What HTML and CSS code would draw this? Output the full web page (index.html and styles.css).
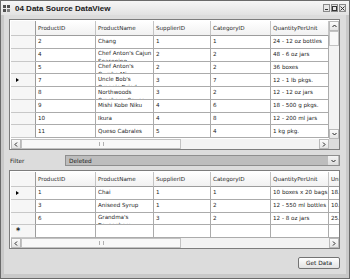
FILE: index.html
```html
<!DOCTYPE html>
<html lang="en">
<head>
    <meta charset="UTF-8">
    <meta name="viewport" content="width=device-width, initial-scale=1.0">
    <title>04 Data Source DataView</title>
    <link rel="stylesheet" href="styles.css">
</head>
<body>
<div class="window">
    <div class="titlebar">
        <svg class="app-icon" width="8" height="7" viewBox="0 0 8 7">
            <rect x="0" y="0" width="3" height="3" fill="#505050"/>
            <rect x="4" y="0" width="3" height="3" fill="#505050"/>
            <rect x="0" y="4" width="3" height="3" fill="#505050"/>
            <rect x="4" y="4" width="3" height="3" fill="#808080"/>
        </svg>
        <span class="title">04 Data Source DataView</span>
        <div class="caption">
            <span class="cap-btn"><svg width="5" height="5" viewBox="0 0 5 5"><rect x="1" y="3" width="3" height="1" fill="#333"/></svg></span>
            <span class="cap-btn"><svg width="5" height="5" viewBox="0 0 5 5"><rect x="0.5" y="0.5" width="4" height="4" fill="none" stroke="#333"/></svg></span>
            <span class="cap-btn"><svg width="5" height="5" viewBox="0 0 5 5"><path d="M0.5 0.5L4.5 4.5M4.5 0.5L0.5 4.5" stroke="#333"/></svg></span>
        </div>
    </div>

    <div class="client">
        <!-- products grid -->
        <div class="grid grid-top">
            <div class="view">
                <div class="row head">
                    <div class="cell rh"></div>
                    <div class="cell">ProductID</div>
                    <div class="cell">ProductName</div>
                    <div class="cell">SupplierID</div>
                    <div class="cell">CategoryID</div>
                    <div class="cell">QuantityPerUnit</div>
                </div>
                <div class="row">
                    <div class="cell rh"></div>
                    <div class="cell"><span>2</span></div>
                    <div class="cell"><span>Chang</span></div>
                    <div class="cell"><span>1</span></div>
                    <div class="cell"><span>1</span></div>
                    <div class="cell"><span>24 - 12 oz bottles</span></div>
                </div>
                <div class="row">
                    <div class="cell rh"></div>
                    <div class="cell"><span>4</span></div>
                    <div class="cell wrap"><span>Chef Anton's Cajun Seasoning</span></div>
                    <div class="cell"><span>2</span></div>
                    <div class="cell"><span>2</span></div>
                    <div class="cell"><span>48 - 6 oz jars</span></div>
                </div>
                <div class="row">
                    <div class="cell rh"></div>
                    <div class="cell"><span>5</span></div>
                    <div class="cell wrap"><span>Chef Anton's Gumbo Mix</span></div>
                    <div class="cell"><span>2</span></div>
                    <div class="cell"><span>2</span></div>
                    <div class="cell"><span>36 boxes</span></div>
                </div>
                <div class="row">
                    <div class="cell rh"><i class="current"></i></div>
                    <div class="cell"><span>7</span></div>
                    <div class="cell wrap"><span>Uncle Bob's Organic Dried Pears</span></div>
                    <div class="cell"><span>3</span></div>
                    <div class="cell"><span>7</span></div>
                    <div class="cell"><span>12 - 1 lb pkgs.</span></div>
                </div>
                <div class="row">
                    <div class="cell rh"></div>
                    <div class="cell"><span>8</span></div>
                    <div class="cell wrap"><span>Northwoods Cranberry Sauce</span></div>
                    <div class="cell"><span>3</span></div>
                    <div class="cell"><span>2</span></div>
                    <div class="cell"><span>12 - 12 oz jars</span></div>
                </div>
                <div class="row">
                    <div class="cell rh"></div>
                    <div class="cell"><span>9</span></div>
                    <div class="cell"><span>Mishi Kobe Niku</span></div>
                    <div class="cell"><span>4</span></div>
                    <div class="cell"><span>6</span></div>
                    <div class="cell"><span>18 - 500 g pkgs.</span></div>
                </div>
                <div class="row">
                    <div class="cell rh"></div>
                    <div class="cell"><span>10</span></div>
                    <div class="cell"><span>Ikura</span></div>
                    <div class="cell"><span>4</span></div>
                    <div class="cell"><span>8</span></div>
                    <div class="cell"><span>12 - 200 ml jars</span></div>
                </div>
                <div class="row">
                    <div class="cell rh"></div>
                    <div class="cell"><span>11</span></div>
                    <div class="cell"><span>Queso Cabrales</span></div>
                    <div class="cell"><span>5</span></div>
                    <div class="cell"><span>4</span></div>
                    <div class="cell"><span>1 kg pkg.</span></div>
                </div>
            </div>
            <div class="vscroll">
                <span class="sb-btn"><svg width="5" height="4" viewBox="0 0 5 4"><path d="M0.5 3L2.5 1L4.5 3" stroke="#222" fill="none"/></svg></span>
                <span class="sb-thumb v"></span>
                <span class="sb-track"></span>
                <span class="sb-btn"><svg width="5" height="4" viewBox="0 0 5 4"><path d="M0.5 1L2.5 3L4.5 1" stroke="#222" fill="none"/></svg></span>
            </div>
            <div class="hscroll">
                <span class="sb-btn"><svg width="4" height="5" viewBox="0 0 4 5"><path d="M3 0.5L1 2.5L3 4.5" stroke="#222" fill="none"/></svg></span>
                <span class="sb-thumb h"><b class="grip"></b></span>
                <span class="sb-track"></span>
                <span class="sb-btn"><svg width="4" height="5" viewBox="0 0 4 5"><path d="M1 0.5L3 2.5L1 4.5" stroke="#222" fill="none"/></svg></span>
            </div>
            <div class="corner"></div>
        </div>

        <div class="filter">
            <label class="filter-label">Filter</label>
            <div class="combo">
                <span class="combo-text">Deleted</span>
                <span class="combo-btn"><svg width="5" height="4" viewBox="0 0 5 4"><path d="M0.5 1L2.5 3L4.5 1" stroke="#222" fill="none"/></svg></span>
            </div>
        </div>

        <!-- filtered view -->
        <div class="grid grid-bottom">
            <div class="view">
                <div class="row head">
                    <div class="cell rh"></div>
                    <div class="cell">ProductID</div>
                    <div class="cell">ProductName</div>
                    <div class="cell">SupplierID</div>
                    <div class="cell">CategoryID</div>
                    <div class="cell">QuantityPerUnit</div>
                    <div class="cell">UnitPrice</div>
                </div>
                <div class="row">
                    <div class="cell rh"><i class="current"></i></div>
                    <div class="cell"><span>1</span></div>
                    <div class="cell"><span>Chai</span></div>
                    <div class="cell"><span>1</span></div>
                    <div class="cell"><span>1</span></div>
                    <div class="cell"><span>10 boxes x 20 bags</span></div>
                    <div class="cell"><span>18.0000</span></div>
                </div>
                <div class="row">
                    <div class="cell rh"></div>
                    <div class="cell"><span>3</span></div>
                    <div class="cell"><span>Aniseed Syrup</span></div>
                    <div class="cell"><span>1</span></div>
                    <div class="cell"><span>2</span></div>
                    <div class="cell"><span>12 - 550 ml bottles</span></div>
                    <div class="cell"><span>10.0000</span></div>
                </div>
                <div class="row">
                    <div class="cell rh"></div>
                    <div class="cell"><span>6</span></div>
                    <div class="cell wrap"><span>Grandma's Boysenberry Spread</span></div>
                    <div class="cell"><span>3</span></div>
                    <div class="cell"><span>2</span></div>
                    <div class="cell"><span>12 - 8 oz jars</span></div>
                    <div class="cell"><span>25.0000</span></div>
                </div>
                <div class="row">
                    <div class="cell rh"><span class="newrow">*</span></div>
                    <div class="cell"></div>
                    <div class="cell"></div>
                    <div class="cell"></div>
                    <div class="cell"></div>
                    <div class="cell"></div>
                    <div class="cell"></div>
                </div>
            </div>
            <div class="hscroll">
                <span class="sb-btn"><svg width="4" height="5" viewBox="0 0 4 5"><path d="M3 0.5L1 2.5L3 4.5" stroke="#222" fill="none"/></svg></span>
                <span class="sb-thumb h"><b class="grip"></b></span>
                <span class="sb-track"></span>
                <span class="sb-btn"><svg width="4" height="5" viewBox="0 0 4 5"><path d="M1 0.5L3 2.5L1 4.5" stroke="#222" fill="none"/></svg></span>
            </div>
        </div>

        <div class="actions">
            <button type="button" class="get-data">Get Data</button>
        </div>
    </div>
</div>
</body>
</html>
```

FILE: styles.css
```css
body{
    margin: 0;
    background: #d8d8d8;
    font-family: "DejaVu Sans", Verdana, sans-serif;
    color: #1c1c1c;
}
.window{
    width: 350px;
    height: 279px;
    box-sizing: border-box;
    border: 1px solid #6a6a6a;
    background: #c9c9c9;
    display: flex;
    flex-direction: column;
}
.titlebar{
    height: 14px;
    flex: none;
    display: flex;
    align-items: center;
    padding: 0 3px 0 2px;
    background: linear-gradient(#f6f6f6, #e2e2e2);
}
.app-icon{
    margin-right: 4px;
}
.title{
    font-family: "Liberation Sans", Arial, sans-serif;
    font-weight: bold;
    font-size: 8px;
    color: #1a1a1a;
}
.caption{
    margin-left: auto;
    display: flex;
    gap: 1px;
}
.cap-btn{
    width: 7px;
    height: 8px;
    box-sizing: border-box;
    border: 1px solid #8a8a8a;
    background: #e6e6e6;
    display: flex;
    align-items: center;
    justify-content: center;
}
.client{
    flex: 1;
    margin: 0 3px 4px;
    padding: 4px 6px 0 5px;
    background: #dcdcdc;
    display: flex;
    flex-direction: column;
}

/* data grids */
.grid{
    display: grid;
    border: 1px solid #7d7d7d;
    padding: 1px 0 0 1px;
    background: #fff;
}
.grid-top{
    grid-template-columns: 1fr 10px;
    grid-template-rows: 118px 10px;
}
.grid-bottom{
    grid-template-columns: 1fr;
    grid-template-rows: 66px 10px;
}
.view{
    overflow: hidden;
    background: #fff;
}
.row{
    display: grid;
    height: 12.75px;
    grid-template-rows: 12.75px;
}
.grid-top .row{
    grid-template-columns: 25px 60px 58px 57px 60px 58px;
}
.grid-bottom .row{
    grid-template-columns: 25px 60px 58px 57px 60px 58px 60px;
}
.row.head{
    height: 15px;
    grid-template-rows: 15px;
}
.cell{
    box-sizing: border-box;
    min-height: 0;
    border-right: 1px solid #ababab;
    border-bottom: 1px solid #ababab;
    padding: 0 0 0 2px;
    display: flex;
    align-items: center;
    overflow: hidden;
    font-size: 5.6px;
    line-height: 7px;
    background: #fff;
}
.cell span{
    flex: none;
    max-width: 100%;
}
.cell.wrap{
    align-items: flex-start;
    line-height: 8px;
    padding-top: 0.5px;
}
.head .cell{
    background: linear-gradient(#ffffff, #f1f1f1);
    border-right-color: #c4c4c4;
    border-bottom-color: #9c9c9c;
    color: #2a2a2a;
    white-space: nowrap;
}
.cell.rh{
    background: #f6f6f6;
    border-right-color: #9c9c9c;
    border-bottom-color: #c8c8c8;
    padding-left: 5px;
}
.current{
    width: 0;
    height: 0;
    border-left: 3px solid #000;
    border-top: 2.5px solid transparent;
    border-bottom: 2.5px solid transparent;
}
.newrow{
    font-size: 8px;
    font-weight: bold;
    line-height: 8px;
    padding-top: 2px;
}

/* scrollbars */
.vscroll, .hscroll{
    display: flex;
    background: #f3f3f3;
}
.vscroll{
    flex-direction: column;
}
.sb-btn{
    flex: none;
    width: 10px;
    height: 10px;
    box-sizing: border-box;
    border: 1px solid #b9b9b9;
    background: linear-gradient(#fbfbfb, #e4e4e4);
    display: flex;
    align-items: center;
    justify-content: center;
}
.sb-thumb{
    flex: none;
    box-sizing: border-box;
    border: 1px solid #c2c2c2;
    background: #f8f8f8;
    display: flex;
    align-items: center;
    justify-content: center;
}
.sb-thumb.v{
    height: 15px;
}
.sb-thumb.h{
    width: 160px;
}
.grip{
    width: 5px;
    height: 4px;
    border-left: 1px solid #b0b0b0;
    border-right: 1px solid #b0b0b0;
    box-sizing: border-box;
}
.sb-track{
    flex: 1;
}
.corner{
    background: #dcdcdc;
}

/* filter */
.filter{
    display: flex;
    align-items: center;
    height: 11px;
    margin: 5px 0 4px;
}
.filter-label{
    width: 55px;
    padding-left: 1px;
    font-size: 5.8px;
}
.combo{
    flex: 1;
    height: 11px;
    box-sizing: border-box;
    border: 1px solid #8e8e8e;
    background: #bdbdbd;
    display: flex;
    align-items: center;
}
.combo-text{
    flex: 1;
    padding-left: 3px;
    font-size: 5.8px;
}
.combo-btn{
    width: 10px;
    height: 9px;
    margin-right: 1px;
    background: linear-gradient(#f4f4f4, #dcdcdc);
    display: flex;
    align-items: center;
    justify-content: center;
}

/* buttons */
.actions{
    display: flex;
    justify-content: flex-end;
    margin-top: 8px;
}
.get-data{
    width: 42px;
    height: 12px;
    padding: 0;
    border: 1px solid #737373;
    border-radius: 2px;
    background: linear-gradient(#ffffff, #e2e2e2);
    font-family: "DejaVu Sans", Verdana, sans-serif;
    font-size: 5.8px;
    color: #1c1c1c;
}
```
